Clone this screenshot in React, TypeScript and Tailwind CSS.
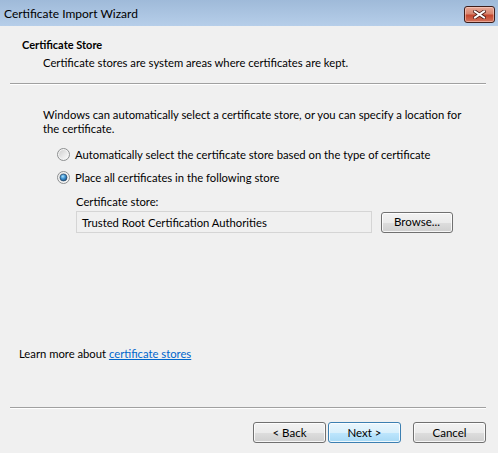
import React from "react";

const font = { fontFamily: '"Lato", "Liberation Sans", sans-serif' };

function CloseIcon() {
  return (
    <svg width="13" height="9" viewBox="0 0 13 9">
      <path d="M2 1.5 L11 7.5 M11 1.5 L2 7.5" stroke="#4a1a14" strokeWidth="3.6" strokeLinecap="square" />
      <path d="M2 1.5 L11 7.5 M11 1.5 L2 7.5" stroke="#ffffff" strokeWidth="2" strokeLinecap="square" />
    </svg>
  );
}

function Radio({ checked }: { checked?: boolean }) {
  return (
    <svg width="13" height="13" viewBox="0 0 13 13" className="shrink-0">
      <defs>
        <linearGradient id={checked ? "rgC" : "rgU"} x1="0" y1="0" x2="1" y2="1">
          <stop offset="0" stopColor="#d0d0d0" />
          <stop offset="1" stopColor="#fbfbfb" />
        </linearGradient>
        <radialGradient id="dot" cx="0.4" cy="0.35" r="0.7">
          <stop offset="0" stopColor="#a9e4ff" />
          <stop offset="0.5" stopColor="#3b8fcf" />
          <stop offset="1" stopColor="#1b4f7f" />
        </radialGradient>
      </defs>
      <circle cx="6.5" cy="6.5" r="6" fill="#f4f4f4" stroke="#8c8e8f" strokeWidth="1" />
      <circle cx="6.5" cy="6.5" r="4.5" fill={`url(#${checked ? "rgC" : "rgU"})`} />
      {checked && <circle cx="6.5" cy="6.5" r="3.5" fill="url(#dot)" stroke="#1f3b57" strokeWidth="0.6" />}
    </svg>
  );
}

function Btn({ children, def, className = "" }: { children: React.ReactNode; def?: boolean; className?: string }) {
  return (
    <div
      className={`h-[21px] rounded-[3px] border flex items-center justify-center text-[11.5px] text-black ${
        def
          ? "border-[#3c7fb1] bg-[linear-gradient(#eaf6fd_0%,#d9f0fc_50%,#bee6fd_51%,#a7d9f5_100%)]"
          : "border-[#707070] bg-[linear-gradient(#f2f2f2_0%,#ebebeb_50%,#dddddd_51%,#cfcfcf_100%)]"
      } shadow-[inset_0_0_0_1px_rgba(255,255,255,0.8)] ${className}`}
    >
      {children}
    </div>
  );
}

export default function App() {
  return (
    <div className="w-[498px] h-[453px] bg-[#f0f0f0] flex flex-col overflow-hidden relative text-black" style={font}>
      {/* Title bar */}
      <div className="h-[26px] shrink-0 bg-[linear-gradient(#9fbad9,#b6cee9)] flex items-center pl-[4px] relative">
        <span className="text-[12px] leading-[15px] text-black">Certificate Import Wizard</span>
        <div className="absolute left-[464px] top-[6px] w-[31px] h-[17px] rounded-[3px] border border-[#3d1d1a] bg-[linear-gradient(#e7a897_0%,#d88670_45%,#c4472f_55%,#d3745c_100%)] shadow-[inset_0_0_0_1px_rgba(255,220,210,0.5)] flex items-center justify-center">
          <CloseIcon />
        </div>
      </div>

      {/* Header */}
      <div className="pt-[11px] text-[11.25px] leading-[15px]">
        <div className="pl-[22px] font-bold text-[11px]">Certificate Store</div>
        <div className="pl-[43px] mt-[3px]">Certificate stores are system areas where certificates are kept.</div>
      </div>
      <div className="mt-[13px] mx-[10px] w-[476px] border-t border-[#a0a0a0] border-b border-b-white h-[2px]" />

      {/* Body */}
      <div className="pl-[43px] text-[11.25px]">
        <div className="mt-[23px] leading-[14px] whitespace-nowrap">
          Windows can automatically select a certificate store, or you can specify a location for
          <br />
          the certificate.
        </div>
        <div className="mt-[11px] pl-[14px] flex items-center gap-[5px] leading-[15px]">
          <Radio />
          <span>Automatically select the certificate store based on the type of certificate</span>
        </div>
        <div className="mt-[8px] pl-[14px] flex items-center gap-[5px] leading-[15px]">
          <Radio checked />
          <span>Place all certificates in the following store</span>
        </div>
        <div className="pl-[33px]">
          <div className="mt-[9px] leading-[15px]">Certificate store:</div>
          <div className="mt-[2px] flex items-center gap-[9px]">
            <div className="w-[296px] h-[22px] border border-[#d5d5d5] bg-[#f0f0f0] flex items-center pl-[5px] leading-[15px]">
              Trusted Root Certification Authorities
            </div>
            <Btn className="w-[72px]">Browse...</Btn>
          </div>
        </div>
      </div>

      <div className="flex-1" />

      <div className="pl-[19px] text-[11.25px] leading-[15px]">
        Learn more about <span className="text-[#0066cc] underline">certificate stores</span>
      </div>
      <div className="mt-[46px] mx-[10px] w-[476px] border-t border-[#a0a0a0] border-b border-b-white h-[2px]" />
      <div className="mt-[13px] mb-[10px] flex pl-[253px]">
        <Btn className="w-[73px]">&lt; Back</Btn>
        <Btn def className="w-[73px] ml-[2px]">Next &gt;</Btn>
        <Btn className="w-[73px] ml-[12px]">Cancel</Btn>
      </div>
    </div>
  );
}
